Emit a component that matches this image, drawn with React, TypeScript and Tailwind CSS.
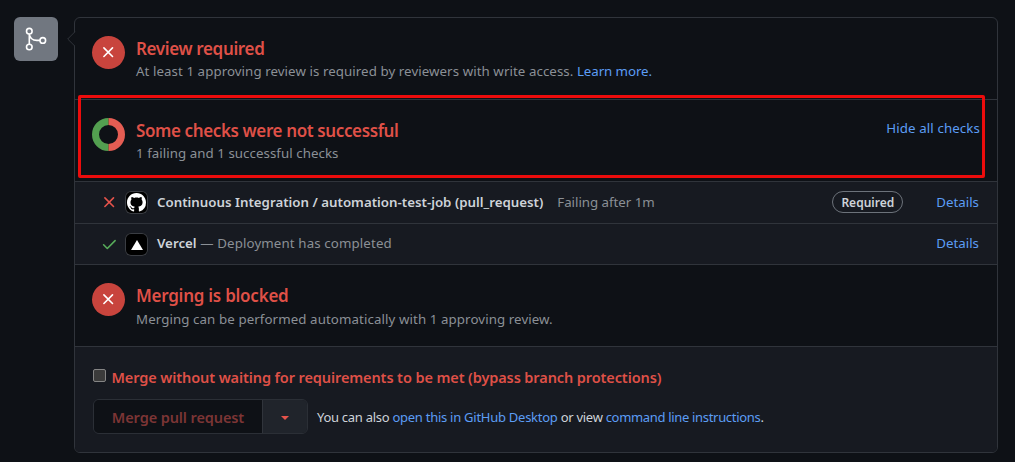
import type { ReactNode } from 'react';

const Cross = ({ className }: { className: string }) => (
  <svg viewBox="0 0 16 16" className={className} fill="none" stroke="currentColor" strokeWidth="1.6" strokeLinecap="round">
    <path d="M3.9 3.9l8.6 8.6M12.5 3.9l-8.6 8.6" />
  </svg>
);

const GitHubMark = () => (
  <svg viewBox="0 0 16 16" className="size-[19px]" fill="currentColor">
    <path d="M8 0C3.58 0 0 3.58 0 8c0 3.54 2.29 6.53 5.47 7.59.4.07.55-.17.55-.38 0-.19-.01-.82-.01-1.49-2.01.37-2.53-.49-2.69-.94-.09-.23-.48-.94-.82-1.13-.28-.15-.68-.52-.01-.53.63-.01 1.08.58 1.23.82.72 1.21 1.87.87 2.33.66.07-.52.28-.87.51-1.07-1.78-.2-3.64-.89-3.64-3.95 0-.87.31-1.59.82-2.15-.08-.2-.36-1.02.08-2.12 0 0 .67-.21 2.2.82.64-.18 1.32-.27 2-.27s1.36.09 2 .27c1.53-1.04 2.2-.82 2.2-.82.44 1.1.16 1.92.08 2.12.51.56.82 1.27.82 2.15 0 3.07-1.87 3.75-3.65 3.95.29.25.54.73.54 1.48 0 1.07-.01 1.93-.01 2.2 0 .21.15.46.55.38A8.01 8.01 0 0 0 16 8c0-4.42-3.58-8-8-8z" />
  </svg>
);

const FailCircle = () => (
  <div className="flex size-[33px] shrink-0 items-center justify-center rounded-full bg-[#c8443d] pr-px pb-px text-white">
    <Cross className="size-4" />
  </div>
);

const Donut = () => (
  <svg viewBox="0 0 33 33" className="size-[33px] shrink-0" fill="none" strokeWidth="7">
    <path d="M16.5 3.5a13 13 0 0 0 0 26" stroke="#539f50" />
    <path d="M16.5 3.5a13 13 0 0 1 0 26" stroke="#e55d53" />
    <path d="M16.5 0v7M16.5 26v7" stroke="#7d6a3d" strokeWidth="0.8" />
  </svg>
);

function Section({ icon, title, children, action }: { icon: ReactNode; title: ReactNode; children: ReactNode; action?: ReactNode }) {
  return (
    <section className="flex h-[82px] items-start border-b border-[#30343b] pt-[18px] pr-[17px] pl-[17px]">
      {icon}
      <div className="ml-[11px] flex-1 pt-px">
        <h2 className="h-6 text-[17px] leading-6 font-semibold whitespace-nowrap text-[#df5047]">{title}</h2>
        <p className="leading-5 text-[#8b9096]">{children}</p>
      </div>
      {action}
    </section>
  );
}

const Link = ({ children, className = '' }: { children: ReactNode; className?: string }) => (
  <a href="#" className={`text-[#5c9df5] ${className}`}>{children}</a>
);

const Avatar = ({ children }: { children: ReactNode }) => (
  <div className="ml-2 flex size-[23px] shrink-0 items-center justify-center rounded-md bg-black text-white ring-1 ring-[#3a3d43] ring-inset">
    {children}
  </div>
);

export default function App() {
  return (
    <main className="flex h-[462px] w-[1015px] items-start bg-[#0e1116] pt-[17px] pl-[14px] font-['Noto_Sans',sans-serif] text-[13.3px] whitespace-nowrap">
      <div className="size-11 shrink-0 rounded-md bg-[#717780]">
        <svg viewBox="0 0 44 44" className="size-11" fill="none" stroke="#fff" strokeWidth="1.6">
          <circle cx="15.3" cy="14.2" r="2.8" />
          <circle cx="15.3" cy="30" r="2.8" />
          <circle cx="28.8" cy="23.4" r="2.8" />
          <path d="M15.3 17v10.2M15.3 17c.6 4.4 3.6 6.4 7.5 6.4H26" />
        </svg>
      </div>

      <div className="relative ml-4 h-[436px] w-[924px] rounded-md border border-[#30343b]">
        <svg viewBox="0 0 9 16" className="absolute top-[13px] -left-2 h-4 w-[9px]">
          <path d="M9 0v16L.7 8z" fill="#0e1116" />
          <path d="M8 .7L.7 8 8 15.3" fill="none" stroke="#30343b" />
        </svg>

        <Section icon={<FailCircle />} title={<span className="tracking-[-0.35px]">Review required</span>}>
          <span className="tracking-[0.07px]">At least 1 approving review is required by reviewers with write access. </span>
          <Link className="tracking-[-0.08px]">Learn more.</Link>
        </Section>

        <Section
          icon={<Donut />}
          title={<span className="tracking-[-0.38px]">Some checks were not successful</span>}
          action={<Link className="leading-5 tracking-[0.1px]">Hide all checks</Link>}
        >
          <span className="tracking-[0.05px]">1 failing and 1 successful checks</span>
        </Section>

        <div className="flex h-[42px] items-start border-b border-[#30343b] bg-[#171a21] pt-[9px] pr-[18px] pl-[26px]">
          <Cross className="mt-[3px] size-4 shrink-0 text-[#e5534b]" />
          <Avatar><GitHubMark /></Avatar>
          <strong className="mt-px ml-[9px] leading-5 font-semibold text-[#ced3d9]">
            Continuous Integration / automation-test-job (pull_request)
          </strong>
          <span className="mt-px ml-[14px] leading-5 tracking-[-0.03px] text-[#8b9096]">Failing after 1m</span>
          <span className="ml-auto flex h-[22px] w-[71px] items-center justify-center rounded-full border border-[#6c727a] pt-px text-xs font-semibold text-[#ced3d9]">
            Required
          </span>
          <Link className="mt-px ml-[33px] leading-5">Details</Link>
        </div>

        <div className="flex h-[41px] items-start border-b border-[#30343b] bg-[#171a21] pt-[9px] pr-[18px] pl-[26px]">
          <svg viewBox="0 0 16 16" className="mt-[3px] size-4 shrink-0" fill="none" stroke="#57ab5a" strokeWidth="1.6" strokeLinecap="round" strokeLinejoin="round">
            <path d="M2.6 8.8l3.7 3.7 7.8-7.9" />
          </svg>
          <Avatar>
            <svg viewBox="0 0 12 10" className="mt-px h-[10px] w-3"><path d="M6 0l6 10H0z" fill="#fff" /></svg>
          </Avatar>
          <p className="ml-[9px] leading-5 text-[#8b9096]">
            <strong className="font-semibold text-[#ced3d9]">Vercel</strong>
            <span className="tracking-[0.12px]"> — Deployment has completed</span>
          </p>
          <Link className="ml-auto leading-5">Details</Link>
        </div>

        <Section icon={<FailCircle />} title={<span className="tracking-[-0.25px]">Merging is blocked</span>}>
          <span className="relative top-px tracking-[0.09px]">Merging can be performed automatically with 1 approving review.</span>
        </Section>

        <footer className="h-[105px] rounded-b-[5px] bg-[#171a21] pt-5 pl-[18px]">
          <label className="flex h-5 items-center text-[14.5px] leading-5 font-semibold tracking-[-0.1px] text-[#df5047]">
            <input type="checkbox" className="mr-[5.5px] -mt-[3px] size-[13px] shrink-0 appearance-none rounded-[2px] border border-[#858585] bg-[#3b3b3b]" />
            Merge without waiting for requirements to be met (bypass branch protections)
          </label>
          <div className="mt-3 flex h-[35px] items-center">
            <div className="flex h-[35px] w-[215px] overflow-hidden rounded-md border border-[#2b2f36]">
              <button className="w-[168px] bg-[#0e1116] pt-[2px] text-[14.5px] font-semibold tracking-[-0.1px] text-[#7c3535]">Merge pull request</button>
              <button className="flex flex-1 items-center justify-center border-l border-[#30343b] bg-[#20242b]">
                <svg viewBox="0 0 8 4" className="mt-[2px] h-1 w-2"><path d="M0 0h8L4 4z" fill="#e5534b" /></svg>
              </button>
            </div>
            <p className="ml-[9px] text-[13px] leading-5 tracking-[-0.28px] text-[#ced3d9]">
              You can also <Link className="tracking-[-0.26px]">open this in GitHub Desktop</Link> or view <Link className="tracking-[-0.32px]">command line instructions</Link>.
            </p>
          </div>
        </footer>

        <div className="absolute top-[77px] left-[3px] h-[83px] w-[907px] rounded-[2px] border-[3px] border-[#ec0c0c]" />
      </div>
    </main>
  );
}
